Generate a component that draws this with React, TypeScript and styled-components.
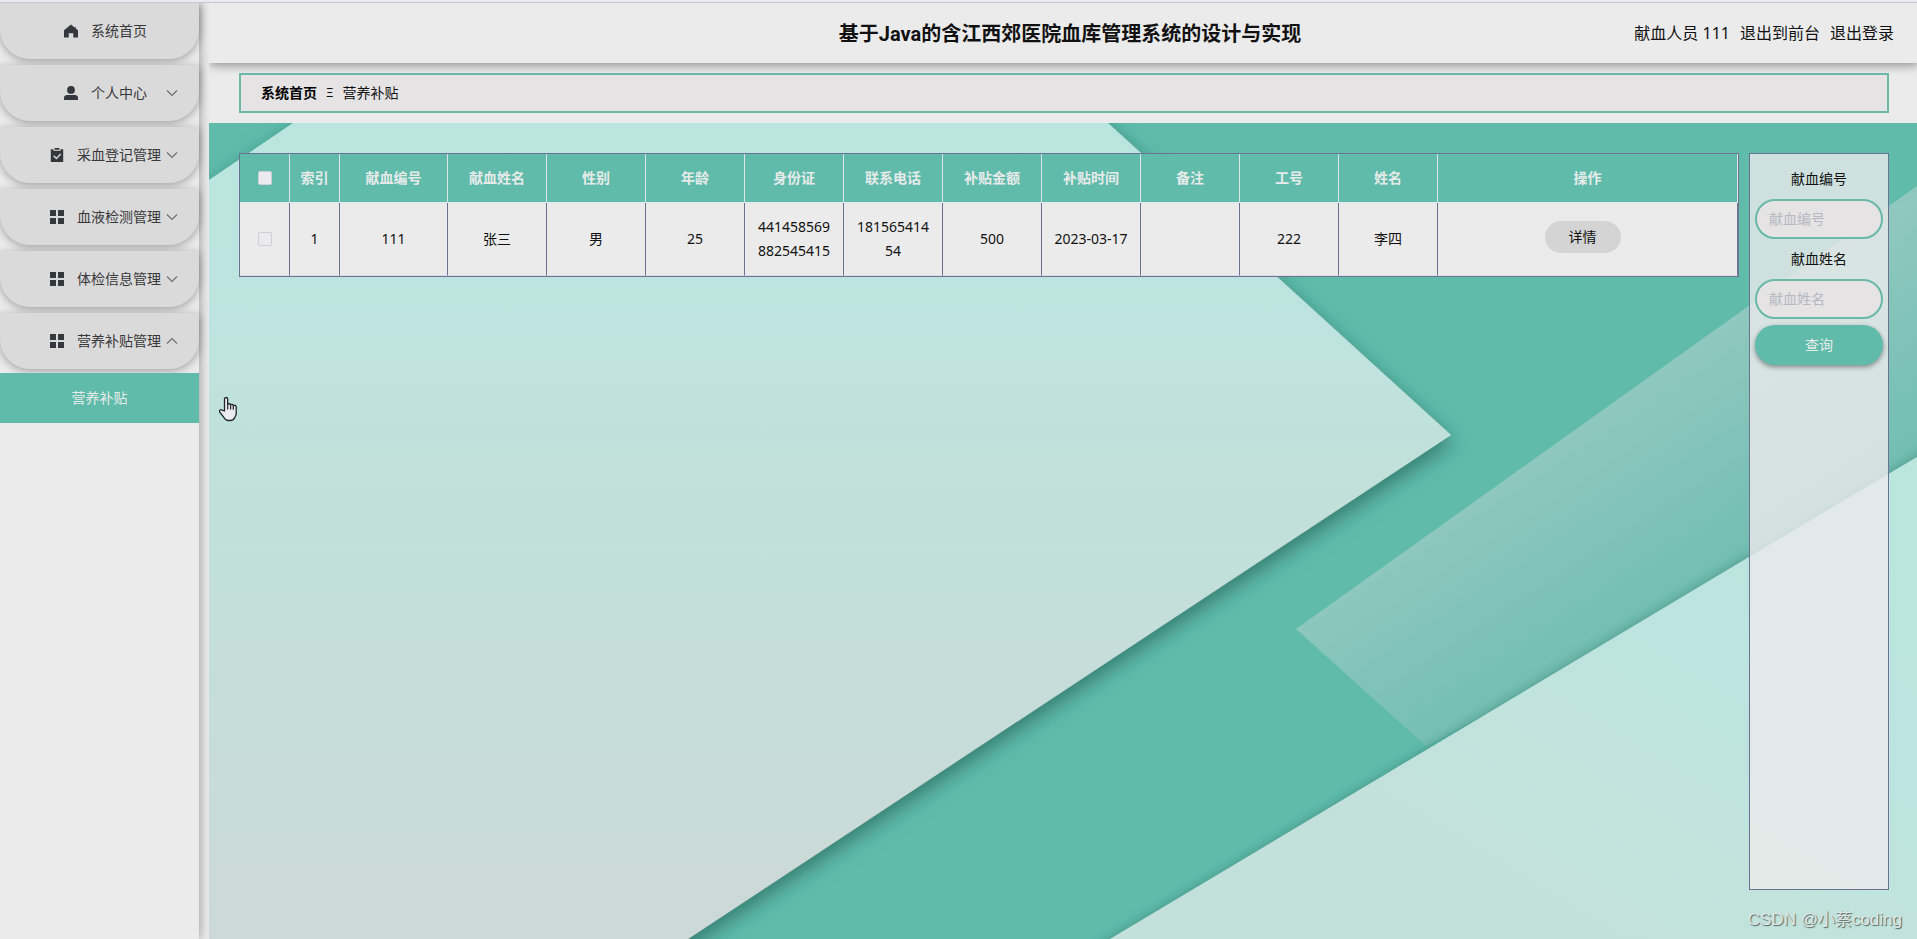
import React from 'react';
import styled, { createGlobalStyle } from 'styled-components';

const color = {
  green: '#60bbab',
  page: '#ebebeb',
  item: '#dadada',
  field: '#e5e3e4',
  line: '#6b7292',
  ink: '#111111',
};

const GlobalStyle = createGlobalStyle`
  *, *::before, *::after { box-sizing: border-box; }
  body {
    margin: 0;
    background: ${color.page};
    color: ${color.ink};
    font: 14px/24px "Noto Sans", "Noto Sans CJK SC", sans-serif;
  }
  button, input { font: inherit; color: inherit; }
  ul { list-style: none; margin: 0; padding: 0; }
`;

const Page = styled.div`
  position: relative;
  display: flex;
  flex-direction: column;
  min-height: 100vh;
`;

const TopLine = styled.div`
  height: 3px;
  flex: none;
  background: #ebe9ef;
  border-bottom: 1px solid #c9c8cf;
`;

const Shell = styled.div`
  flex: 1;
  display: flex;
  gap: 10px;
`;

const Sidebar = styled.nav`
  width: 199px;
  flex: none;
  background: ${color.page};
  box-shadow: 1px 0 10px rgba(0, 0, 0, 0.34);
  clip-path: inset(0 -10px 0 0);
`;

const MenuEntry = styled.li`
  margin-bottom: 6px;
  &:last-child { margin-bottom: 0; }
`;

const MenuButton = styled.button`
  width: 100%;
  height: 56px;
  padding: 0 21px 0 33px;
  border: 0;
  border-radius: 0 0 30px 30px;
  background: ${color.item};
  box-shadow: 0 2px 8px rgba(0, 0, 0, 0.32);
  color: #38383b;
  display: grid;
  grid-template-columns: 1fr auto 1fr;
  align-items: center;
  cursor: pointer;
`;

const MenuLabel = styled.span`
  grid-column: 2;
  display: flex;
  align-items: center;
  gap: 13px;
  white-space: nowrap;
`;

const Arrow = styled.svg<{ $open?: boolean }>`
  justify-self: end;
  transform: ${(p) => (p.$open ? 'rotate(180deg)' : 'none')};
`;

const SubItem = styled.a`
  display: block;
  margin-top: 4px;
  height: 50px;
  line-height: 50px;
  position: relative;
  background: ${color.green};
  color: #e6ebea;
  text-align: center;
  text-decoration: none;
`;

const Main = styled.main`
  flex: 1;
  min-width: 0;
  display: flex;
  flex-direction: column;
  overflow: hidden;
  background: ${color.page};
`;

const Header = styled.header`
  height: 60px;
  flex: none;
  padding: 0 23px 0 37px;
  display: grid;
  grid-template-columns: 1fr auto 1fr;
  align-items: center;
  background: ${color.page};
  box-shadow: 1px 2px 10px rgba(0, 0, 0, 0.42);
`;

const Title = styled.h1`
  grid-column: 2;
  margin: 0;
  padding-top: 2px;
  font-family: Roboto, "Noto Sans CJK SC", sans-serif;
  font-size: 20px;
  line-height: 28px;
  font-weight: 700;
`;

const Account = styled.div`
  justify-self: end;
  display: flex;
  gap: 10px;
  font-size: 16px;
  white-space: nowrap;
`;

const AccountLink = styled.a`
  color: inherit;
  text-decoration: none;
`;

const Breadcrumb = styled.nav`
  margin: 10px 28px 10px 30px;
  height: 40px;
  flex: none;
  padding: 0 20px;
  display: flex;
  align-items: center;
  gap: 9px;
  border: 2px solid #69b8a8;
  background: ${color.field};
`;

const CrumbLink = styled.a`
  color: #000;
  font-weight: 700;
  text-decoration: none;
`;

const CrumbMark = styled.span`
  font-size: 12px;
`;

const Content = styled.section`
  position: relative;
  isolation: isolate;
  flex: 1;
  padding: 30px 28px 49px 30px;
  display: flex;
  gap: 10px;
  background: ${color.green};
`;

const Backdrop = styled.svg`
  position: absolute;
  inset: 0;
  width: 100%;
  height: 100%;
  z-index: -1;
`;

const TableArea = styled.div`
  flex: 1;
  min-width: 0;
`;

const Table = styled.table`
  width: 100%;
  table-layout: fixed;
  border-collapse: separate;
  border-spacing: 0;
  border: 1px solid ${color.line};
  background: ${color.page};
  text-align: center;
`;

const HeadCell = styled.th`
  height: 49px;
  padding: 0;
  background: ${color.green};
  color: #e6ebea;
  font-weight: 700;
  border-right: 1px solid #dfe5e4;
  border-bottom: 1px solid #e6e9e9;
`;

const Cell = styled.td`
  height: 73px;
  padding: 0 10px 1px;
  border-right: 1px solid ${color.line};
  border-bottom: 1px solid #dcdce4;
  word-break: break-all;
`;

const DateCell = styled(Cell)`
  padding: 0 0 1px;
  white-space: nowrap;
`;

const ActionCell = styled(Cell)`
  padding: 0 10px 4px 0;
`;

const Check = styled.input`
  appearance: none;
  display: block;
  width: 14px;
  height: 14px;
  margin: 0 auto;
  border: 1px solid #cfcdd8;
  border-radius: 2px;
  background: #ebeaee;
`;

const DetailButton = styled.button`
  width: 76px;
  height: 32px;
  padding: 0;
  border: 0;
  border-radius: 16px;
  background: #d4d4d4;
  vertical-align: middle;
  cursor: pointer;
`;

const SearchPanel = styled.form`
  width: 140px;
  flex: none;
  padding: 5px;
  display: flex;
  flex-direction: column;
  border: 1px solid ${color.line};
  background: rgba(235, 235, 235, 0.8);
`;

const FieldLabel = styled.label`
  line-height: 40px;
  text-align: center;
`;

const Field = styled.input`
  width: 100%;
  height: 40px;
  padding: 0 12px 2px;
  border: 2px solid #69b8a8;
  border-radius: 20px;
  background: ${color.field};
  outline: none;
  &::placeholder { color: #b5b8c2; opacity: 1; }
`;

const SearchButton = styled.button`
  height: 40px;
  margin-top: 6px;
  padding: 0;
  border: 0;
  border-radius: 20px;
  background: ${color.green};
  box-shadow: 0 2px 5px rgba(0, 0, 0, 0.4);
  color: #e6ebea;
  cursor: pointer;
`;

const Watermark = styled.div`
  position: absolute;
  right: 15px;
  bottom: 6px;
  font: 17px/26px "Liberation Sans", "Noto Sans CJK SC", sans-serif;
  color: #dfe7e5;
  text-shadow: 1px 1px 1px rgba(60, 75, 72, 0.85);
  pointer-events: none;
`;

const Pointer = styled.svg`
  position: absolute;
  left: 218px;
  top: 396px;
  pointer-events: none;
`;

type IconName = 'home' | 'user' | 'claim' | 'grid';

function MenuIcon({ name }: { name: IconName }) {
  return (
    <svg width="14" height="14" viewBox="0 0 14 14" fill="#34383d" aria-hidden="true">
      {name === 'home' && (
        <path d="M7 .6 0 6.200V13.600h4.700V9.200h4.600v4.400H14V6.200L11.800 4.400V3.200h-1.500z" />
      )}
      {name === 'user' && (
        <>
          <circle cx="7" cy="3.9" r="3.9" />
          <path d="M0 14v-2.200C0 9.900 1.300 9 3.200 9h7.600c1.900 0 3.200.9 3.200 2.800V14z" />
        </>
      )}
      {name === 'claim' && (
        <>
          <path d="M.8 1.200h2.600v1.500h7.200V1.200h2.600V14H.8z" />
          <path d="M4.500 0h5v1.700h-5z" />
          <path d="m3.700 7.700 2.700 2.700 4.300-4.500" fill="none" stroke="#dadada" strokeWidth="1.400" />
        </>
      )}
      {name === 'grid' && <path d="M0 0h6v6H0zM8 0h6v6H8zM0 8h6v6H0zM8 8h6v6H8z" />}
    </svg>
  );
}

const menu: { label: string; icon: IconName; arrow?: boolean; children?: string[] }[] = [
  { label: '系统首页', icon: 'home' },
  { label: '个人中心', icon: 'user', arrow: true },
  { label: '采血登记管理', icon: 'claim', arrow: true },
  { label: '血液检测管理', icon: 'grid', arrow: true },
  { label: '体检信息管理', icon: 'grid', arrow: true },
  { label: '营养补贴管理', icon: 'grid', arrow: true, children: ['营养补贴'] },
];

const columns = [
  '献血编号', '献血姓名', '性别', '年龄', '身份证', '联系电话',
  '补贴金额', '补贴时间', '备注', '工号', '姓名',
];

const rows = [
  ['111', '张三', '男', '25', '441458569882545415', '18156541454', '500', '2023-03-17', '', '222', '李四'],
];

const searchFields = [
  { id: 'donor-no', label: '献血编号' },
  { id: 'donor-name', label: '献血姓名' },
];

function BackdropArt() {
  return (
    <Backdrop viewBox="0 0 1708 816" preserveAspectRatio="none" aria-hidden="true">
      <defs>
        <linearGradient id="sheet" x1="0" y1="0" x2="0" y2="1">
          <stop offset="0" stopColor="#b9e6df" />
          <stop offset="0.27" stopColor="#bee3e0" />
          <stop offset="0.42" stopColor="#c1e1da" />
          <stop offset="0.7" stopColor="#c6ddd9" />
          <stop offset="1" stopColor="#ced8d6" />
        </linearGradient>
        <linearGradient id="corner" gradientUnits="userSpaceOnUse" x1="1708" y1="340" x2="1380" y2="880">
          <stop offset="0" stopColor="#bae6dd" />
          <stop offset="0.4" stopColor="#bce4e1" />
          <stop offset="0.7" stopColor="#c1e3dc" />
          <stop offset="1" stopColor="#c3e0da" />
        </linearGradient>
        <linearGradient id="band" gradientUnits="userSpaceOnUse" x1="1310" y1="330" x2="1440" y2="530">
          <stop offset="0" stopColor="#90c8bf" />
          <stop offset="1" stopColor="#6fbdb0" />
        </linearGradient>
        <filter id="sheetShadow" x="-5%" y="-5%" width="115%" height="115%">
          <feDropShadow dx="2" dy="8" stdDeviation="10" floodColor="#1f574e" floodOpacity="0.62" />
        </filter>
        <filter id="cornerShadow" x="-5%" y="-10%" width="115%" height="115%">
          <feDropShadow dx="-1" dy="-2" stdDeviation="5" floodColor="#2c6e63" floodOpacity="0.38" />
        </filter>
      </defs>
      <path d="M1087 506 1541 182 1708 63V360L1217 623z" fill="url(#band)" />
      <path d="M901 816 1540 434 1708 334 1760 303V870H811z" fill="url(#corner)" filter="url(#cornerShadow)" />
      <path d="M-60 98 0 57 84 0 143-40H855L899 0 1242 312 479 816 403 866H-60z" fill="url(#sheet)" filter="url(#sheetShadow)" />
    </Backdrop>
  );
}

export default function App() {
  return (
    <Page>
      <GlobalStyle />
      <TopLine />
      <Shell>
        <Sidebar aria-label="主菜单">
          <ul>
            {menu.map((item) => (
              <MenuEntry key={item.label}>
                <MenuButton type="button">
                  <MenuLabel>
                    <MenuIcon name={item.icon} />
                    {item.label}
                  </MenuLabel>
                  {item.arrow && (
                    <Arrow $open={!!item.children} width="12" height="12" viewBox="0 0 12 12" aria-hidden="true">
                      <path d="m1 3.500 5 5 5-5" fill="none" stroke="#6a6c71" strokeWidth="1.100" />
                    </Arrow>
                  )}
                </MenuButton>
                {item.children?.map((child) => (
                  <SubItem href="#" key={child}>{child}</SubItem>
                ))}
              </MenuEntry>
            ))}
          </ul>
        </Sidebar>
        <Main>
          <Header>
            <Title>基于Java的含江西郊医院血库管理系统的设计与实现</Title>
            <Account>
              <span>献血人员 111</span>
              <AccountLink href="#">退出到前台</AccountLink>
              <AccountLink href="#">退出登录</AccountLink>
            </Account>
          </Header>
          <Breadcrumb aria-label="当前位置">
            <CrumbLink href="#">系统首页</CrumbLink>
            <CrumbMark>Ξ</CrumbMark>
            <span>营养补贴</span>
          </Breadcrumb>
          <Content>
            <BackdropArt />
            <TableArea>
              <Table>
                <colgroup>
                  <col width="50" />
                  <col width="50" />
                  <col width="108" />
                  {columns.slice(1).map((c) => (
                    <col key={c} width="99" />
                  ))}
                  <col />
                </colgroup>
                <thead>
                  <tr>
                    <HeadCell><Check type="checkbox" aria-label="全选" /></HeadCell>
                    <HeadCell>索引</HeadCell>
                    {columns.map((c) => (
                      <HeadCell key={c}>{c}</HeadCell>
                    ))}
                    <HeadCell>操作</HeadCell>
                  </tr>
                </thead>
                <tbody>
                  {rows.map((row, r) => (
                    <tr key={row[0]}>
                      <Cell><Check type="checkbox" aria-label={`选择第${r + 1}行`} /></Cell>
                      <Cell>{r + 1}</Cell>
                      {row.map((value, i) =>
                        columns[i] === '补贴时间' ? (
                          <DateCell key={columns[i]}>{value}</DateCell>
                        ) : (
                          <Cell key={columns[i]}>{value}</Cell>
                        ),
                      )}
                      <ActionCell><DetailButton type="button">详情</DetailButton></ActionCell>
                    </tr>
                  ))}
                </tbody>
              </Table>
            </TableArea>
            <SearchPanel>
              {searchFields.map((f) => (
                <React.Fragment key={f.id}>
                  <FieldLabel htmlFor={f.id}>{f.label}</FieldLabel>
                  <Field id={f.id} placeholder={f.label} />
                </React.Fragment>
              ))}
              <SearchButton type="button">查询</SearchButton>
            </SearchPanel>
          </Content>
        </Main>
      </Shell>
      <Watermark>CSDN @小蔡coding</Watermark>
      <Pointer width="20" height="26" viewBox="0 0 20 26" aria-hidden="true">
        <path
          d="M6.500 15V3.200c0-2.300 3.200-2.300 3.200 0v5.300c.6-1.200 2.700-1 2.900.5.700-1 2.500-.7 2.700.7.900-.8 2.900-.3 2.900 1.400v6.400c0 2-1 3-1.500 4-.8 2-2.200 3-4.200 3h-2c-2 0-3.500-1-4.500-2.800L1.700 16c-.9-1.900 1-3 2.300-1.900z"
          fill="#ecebee"
          stroke="#20252b"
          strokeWidth="1.300"
          strokeLinejoin="round"
        />
        <path d="M9.700 8.500v5M12.600 9v4.500M15.300 9.800v4" stroke="#20252b" strokeWidth="1.200" fill="none" />
      </Pointer>
    </Page>
  );
}
